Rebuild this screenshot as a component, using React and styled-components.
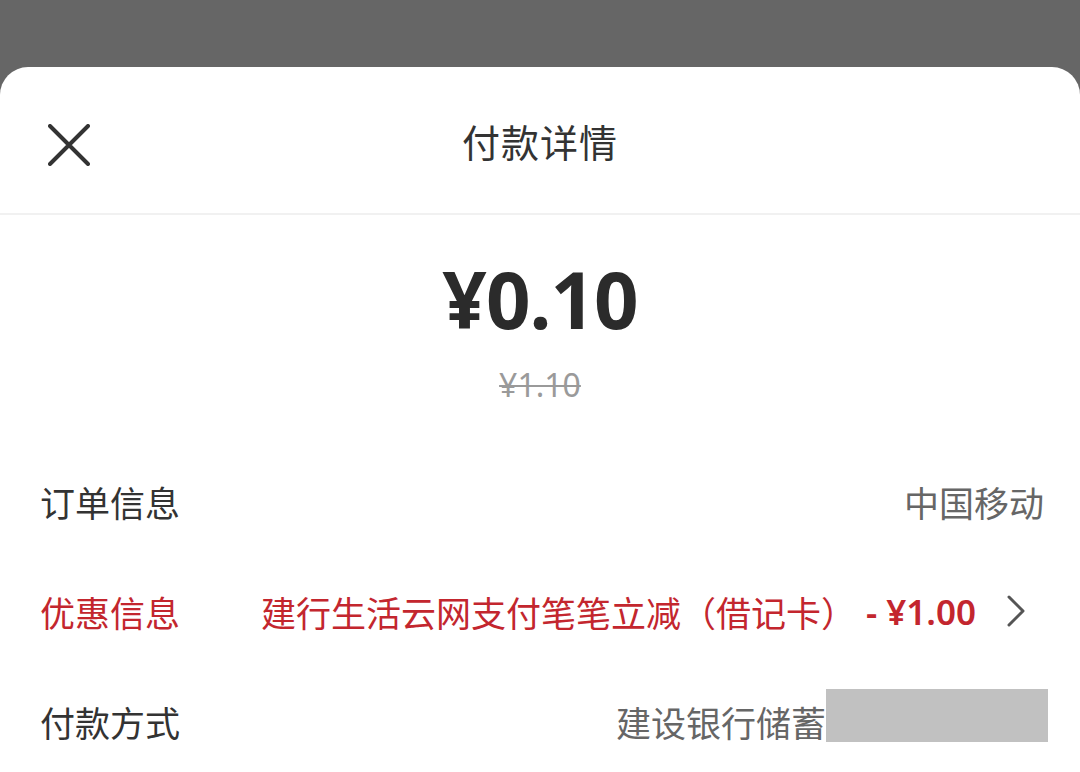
import React from "react";
import styled, { createGlobalStyle } from "styled-components";

const GlobalStyle = createGlobalStyle`
  html, body {
    margin: 0;
    padding: 0;
    background: #666666;
  }
  body {
    font-family: "Noto Sans", "Noto Sans CJK SC", sans-serif;
  }
`;

const Page = styled.div`
  padding-top: 67px;
  height: 772px;
  box-sizing: border-box;
  overflow: hidden;
`;

const Sheet = styled.div`
  background: #ffffff;
  border-radius: 28px 28px 0 0;
  min-height: 100%;
`;

const Header = styled.div`
  position: relative;
  height: 148px;
  display: flex;
  align-items: center;
  justify-content: center;
  box-sizing: border-box;
  border-bottom: 2px solid #f1f1f1;
`;

const CloseButton = styled.div`
  position: absolute;
  left: 48px;
  top: 57px;
  width: 42px;
  height: 42px;
  display: flex;
`;

const Title = styled.div`
  font-family: "Noto Sans CJK SC", sans-serif;
  font-size: 38px;
  color: #333333;
  letter-spacing: 1px;
`;

const AmountBlock = styled.div`
  display: flex;
  flex-direction: column;
  align-items: center;
  padding-top: 44px;
`;

const Amount = styled.div`
  font-family: "Noto Sans", "Noto Sans CJK SC", sans-serif;
  font-size: 78px;
  line-height: 80px;
  font-weight: 700;
  color: #2b2b2b;
  letter-spacing: -1px;
`;

const Original = styled.div`
  margin-top: 26px;
  font-size: 32px;
  line-height: 40px;
  color: #9a9a9a;
  text-decoration: line-through;
  text-decoration-thickness: 2px;
`;

const Rows = styled.div`
  margin-top: 41px;
  display: flex;
  flex-direction: column;
`;

const Row = styled.div`
  height: 110px;
  display: flex;
  align-items: center;
  justify-content: space-between;
  padding: 0 36px 0 40px;
`;

const Label = styled.div`
  font-family: "Noto Sans CJK SC", sans-serif;
  font-size: 35px;
  color: ${(p) => (p.$red ? "#c3262e" : "#333333")};
`;

const Value = styled.div`
  display: flex;
  align-items: center;
  font-family: "Noto Sans CJK SC", sans-serif;
  font-size: 35px;
  color: ${(p) => (p.$red ? "#c3262e" : "#666666")};
`;

const Price = styled.span`
  font-family: "Noto Sans", "Noto Sans CJK SC", sans-serif;
  font-weight: 600;
  margin-left: 10px;
`;

const Chevron = styled.svg`
  margin-left: 30px;
  margin-right: 18px;
`;

const Redacted = styled.div`
  width: 222px;
  height: 53px;
  background: #c1c1c1;
  margin-bottom: 12px;
  margin-right: -4px;
`;

export default function App() {
  return (
    <>
      <GlobalStyle />
      <Page>
        <Sheet>
          <Header>
            <CloseButton>
              <svg width="42" height="42" viewBox="0 0 42 42">
                <path d="M2 2 L40 40 M40 2 L2 40" stroke="#333" strokeWidth="4" strokeLinecap="round" />
              </svg>
            </CloseButton>
            <Title>付款详情</Title>
          </Header>
          <AmountBlock>
            <Amount>¥0.10</Amount>
            <Original>¥1.10</Original>
          </AmountBlock>
          <Rows>
            <Row>
              <Label>订单信息</Label>
              <Value>中国移动</Value>
            </Row>
            <Row>
              <Label $red>优惠信息</Label>
              <Value $red>
                建行生活云网支付笔笔立减（借记卡）
                <Price>- ¥1.00</Price>
                <Chevron width="20" height="34" viewBox="0 0 20 34">
                  <path d="M3 3 L17 17 L3 31" fill="none" stroke="#555" strokeWidth="3" strokeLinecap="round" strokeLinejoin="round" />
                </Chevron>
              </Value>
            </Row>
            <Row>
              <Label>付款方式</Label>
              <Value>
                建设银行储蓄
                <Redacted />
              </Value>
            </Row>
          </Rows>
        </Sheet>
      </Page>
    </>
  );
}
